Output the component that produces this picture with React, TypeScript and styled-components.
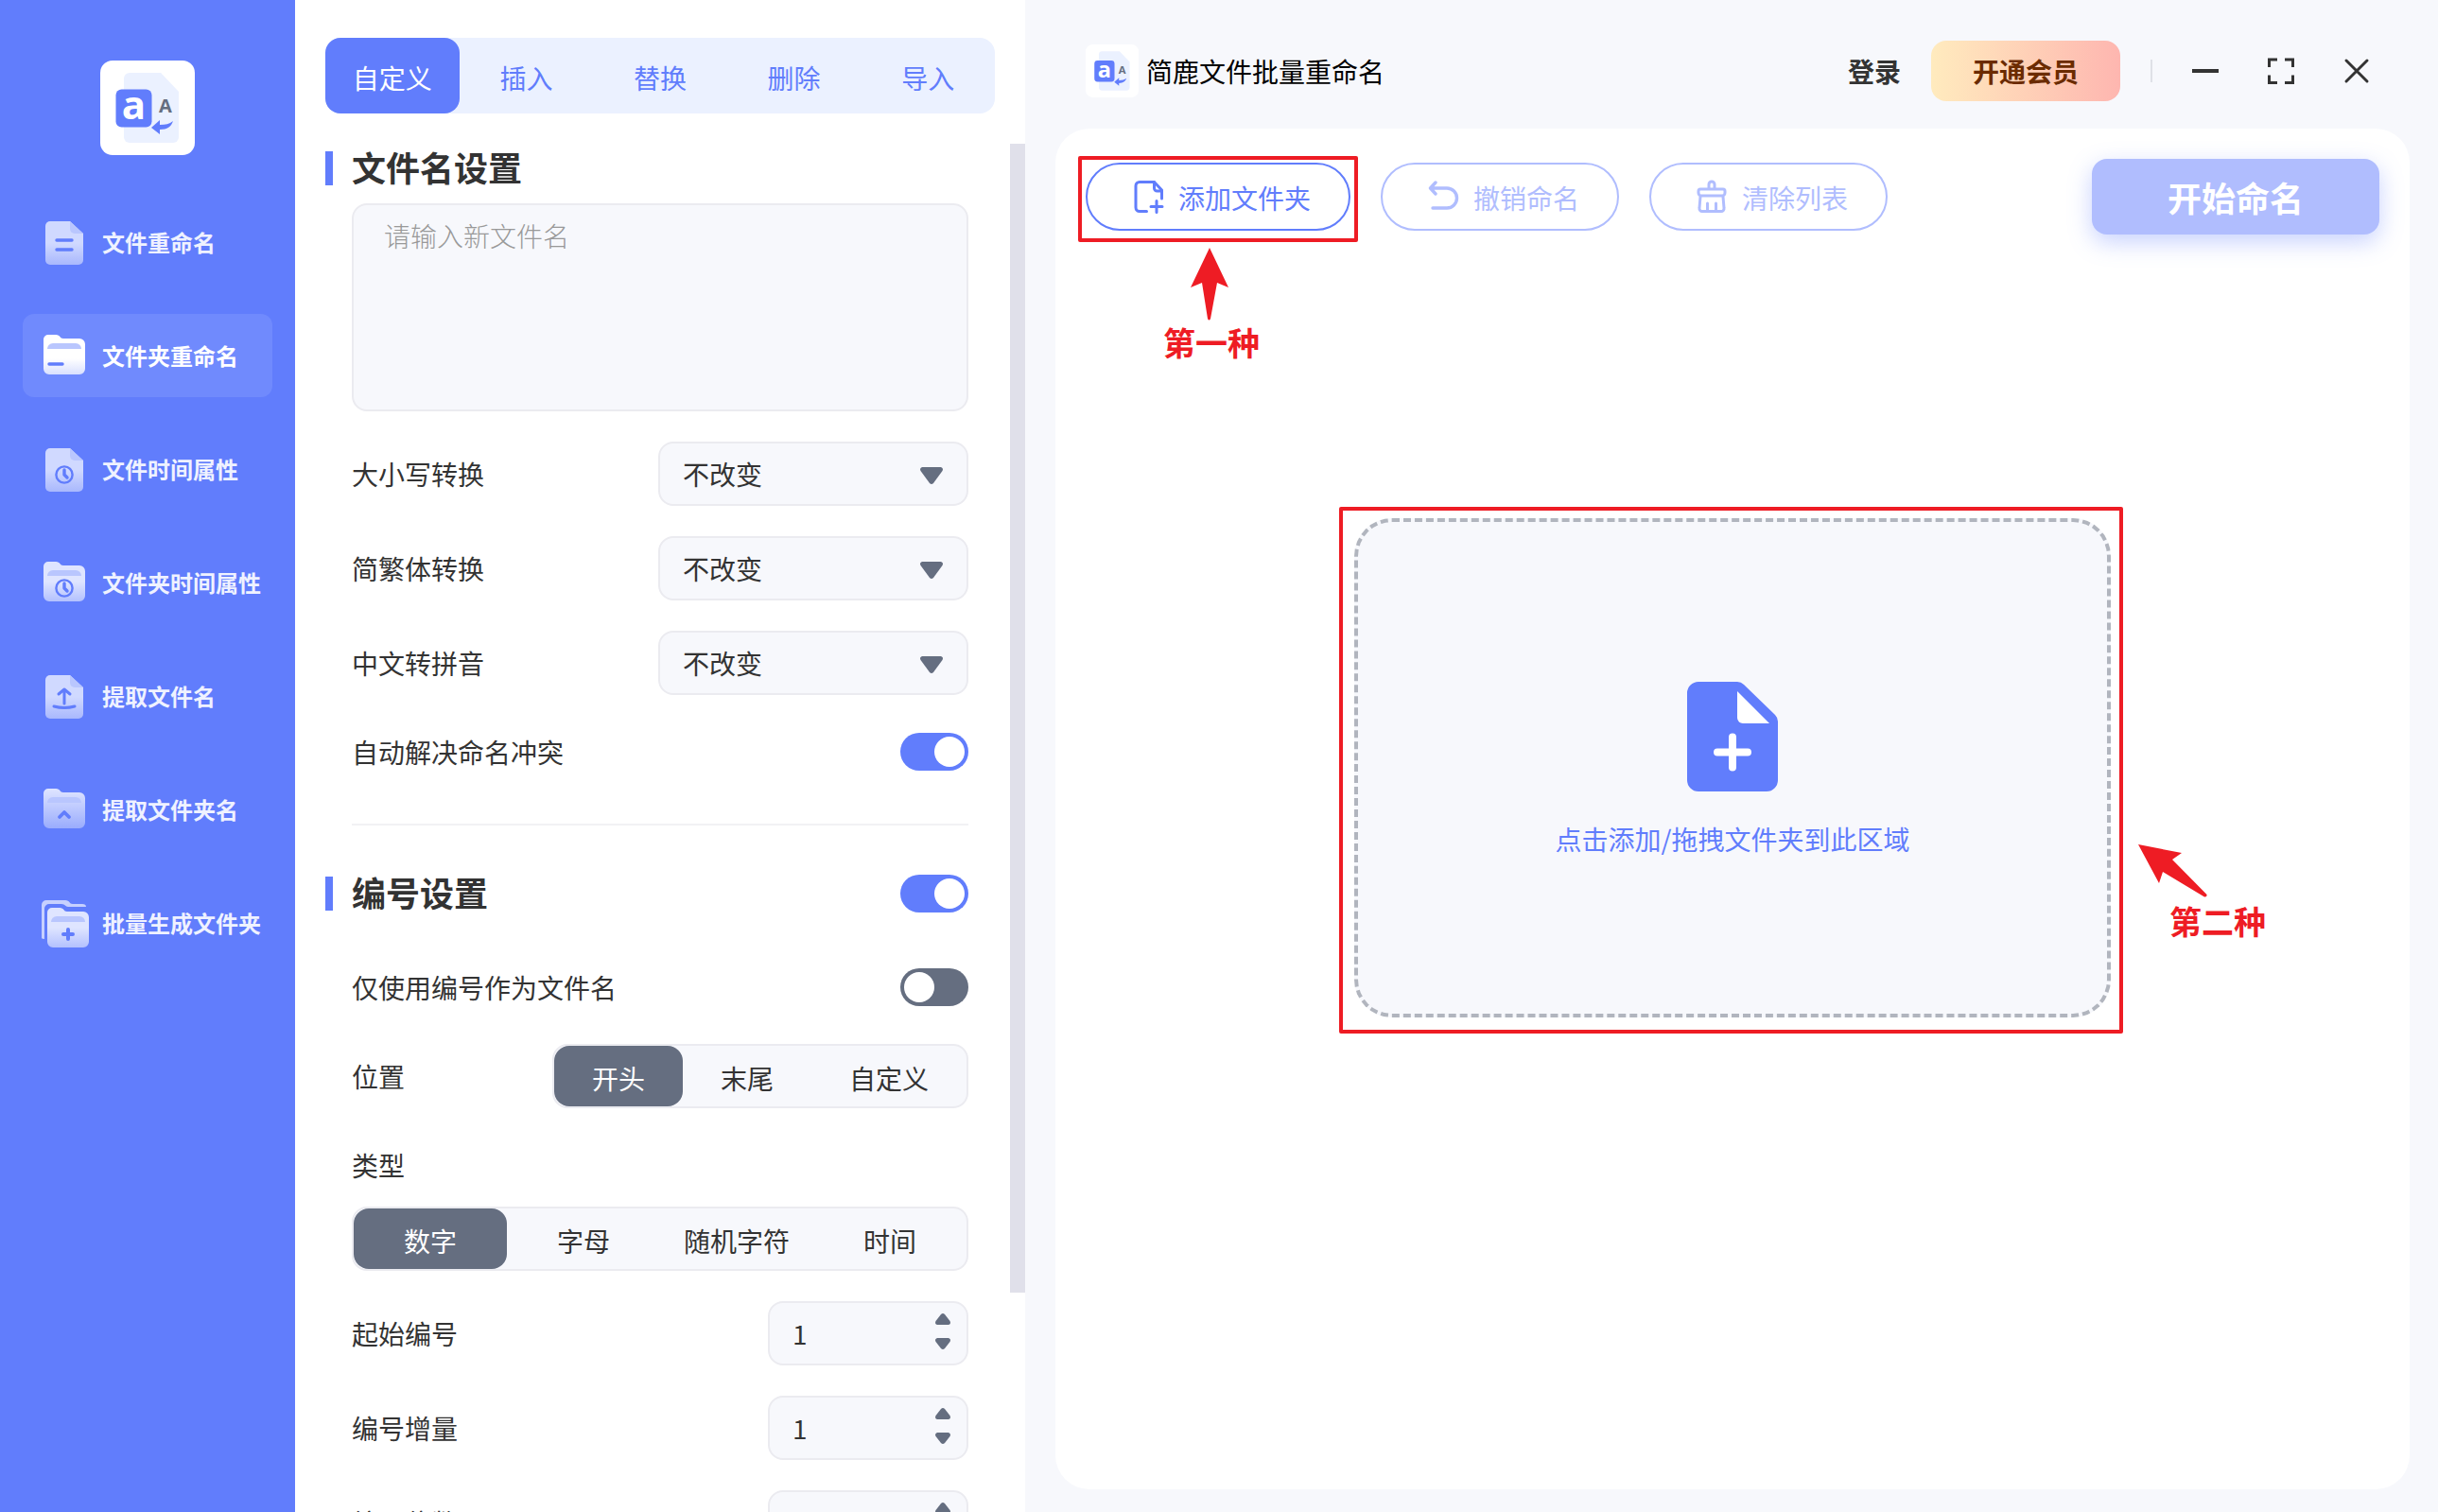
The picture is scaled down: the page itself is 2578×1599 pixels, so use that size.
import React, { useId, useState } from "react";
import styled, { createGlobalStyle, css } from "styled-components";

const c = {
  primary: "#617dfc",
  primarySoft: "#ebf1ff",
  primaryMuted: "#b0bdfe",
  slate: "#656e80",
  text: "#333333",
  surface: "#f7f8fc",
  line: "#ebebf0",
  mark: "#ee1c24",
};

const GlobalStyle = createGlobalStyle`
  *, *::before, *::after { box-sizing: border-box; }
  body { margin: 0; background: ${c.surface}; }
  body, button, input, select, textarea {
    font-family: "Noto Sans CJK SC", "Noto Sans", sans-serif;
    font-size: 28px;
    line-height: 40px;
    color: ${c.text};
  }
  button { border: 0; padding: 0; background: none; cursor: pointer; }
  button:disabled { cursor: default; }
  svg { display: block; flex: none; }
`;

/* ---------- frame ---------- */

const Shell = styled.div`
  display: grid;
  grid-template-columns: 312px 772px minmax(0, 1fr);
  height: 100vh;
  overflow: hidden;
`;

const Sidebar = styled.nav`
  display: flex;
  flex-direction: column;
  align-items: center;
  gap: 48px;
  padding: 64px 24px 0;
  background: ${c.primary};
`;

const NavList = styled.div`
  display: flex;
  flex-direction: column;
  align-self: stretch;
  gap: 32px;
`;

const NavButton = styled.button<{ $active: boolean }>`
  display: flex;
  align-items: center;
  gap: 12px;
  height: 88px;
  padding-left: 20px;
  border-radius: 12px;
  background: ${(p) => (p.$active ? "#708afd" : "transparent")};
  color: ${(p) => (p.$active ? "#ffffff" : "#eff2ff")};
  font-size: 24px;
  font-weight: 700;
  white-space: nowrap;
`;

/* ---------- settings panel ---------- */

const Panel = styled.section`
  display: flex;
  flex-direction: column;
  gap: 32px;
  min-height: 0;
  padding-top: 40px;
  background: #ffffff;
`;

const Tabs = styled.div`
  display: grid;
  grid-template-columns: repeat(5, 1fr);
  flex: none;
  height: 80px;
  margin: 0 32px;
  border-radius: 16px;
  background: ${c.primarySoft};
`;

const Tab = styled.button<{ $active: boolean }>`
  border-radius: 16px;
  padding-top: 4px;
  background: ${(p) => (p.$active ? c.primary : "transparent")};
  color: ${(p) => (p.$active ? "#ffffff" : c.primary)};
`;

const ScrollArea = styled.div`
  display: flex;
  flex: 1;
  min-height: 0;
`;

const ScrollBody = styled.div`
  flex: 1;
  min-width: 0;
  padding: 6px 44px 32px 32px;
  overflow: auto;
  scrollbar-width: none;
`;

const ScrollTrack = styled.div`
  flex: none;
  width: 16px;
`;

const ScrollThumb = styled.div`
  height: 84%;
  background: #e0e0ea;
`;

const SectionHead = styled.div`
  display: flex;
  align-items: center;
  gap: 20px;
  height: 40px;
`;

const SectionMark = styled.span`
  width: 8px;
  height: 36px;
  background: ${c.primary};
`;

const SectionTitle = styled.h2`
  flex: 1;
  margin: 0;
  padding-bottom: 4px;
  font-size: 36px;
  line-height: 40px;
  font-weight: 700;
`;

const SectionBody = styled.div<{ $top?: number }>`
  display: flex;
  flex-direction: column;
  padding: ${(p) => p.$top ?? 0}px 0 0 28px;
`;

const NameArea = styled.textarea`
  display: block;
  height: 220px;
  margin-bottom: 32px;
  padding: 12px 32px;
  border: 2px solid ${c.line};
  border-radius: 16px;
  background: ${c.surface};
  resize: none;
  outline: none;
  &::placeholder { color: #999999; font-weight: 300; opacity: 1; }
`;

const Row = styled.div<{ $h?: number; $gap?: number }>`
  display: flex;
  align-items: center;
  justify-content: space-between;
  height: ${(p) => p.$h ?? 68}px;
  margin-bottom: ${(p) => p.$gap ?? 32}px;
`;

const Divider = styled.hr`
  height: 2px;
  margin: 16px 0 52px;
  border: 0;
  background: #f2f2f4;
`;

const Field = styled.div<{ $w: number }>`
  display: grid;
  align-items: center;
  width: ${(p) => p.$w}px;
  height: 68px;
  border: 2px solid ${c.line};
  border-radius: 16px;
  background: ${c.surface};
  > * { grid-area: 1 / 1; }
`;

const SelectBox = styled.select`
  height: 64px;
  padding: 0 24px;
  border: 0;
  background: transparent;
  appearance: none;
  outline: none;
`;

const SelectArrow = styled.svg`
  justify-self: end;
  margin: 4px 24px 0 0;
  pointer-events: none;
`;

const NumberBox = styled.input`
  width: 100%;
  height: 64px;
  padding: 0 60px 0 24px;
  border: 0;
  background: transparent;
  appearance: textfield;
  outline: none;
  &::-webkit-inner-spin-button { appearance: none; }
`;

const Steppers = styled.div`
  display: grid;
  gap: 12px;
  justify-self: end;
  margin: 0 16px 4px 0;
`;

const Step = styled.button`
  display: block;
  line-height: 0;
`;

const Switch = styled.input`
  display: flex;
  flex: none;
  width: 72px;
  height: 40px;
  margin: 0;
  padding: 4px;
  border-radius: 20px;
  background: ${c.slate};
  appearance: none;
  cursor: pointer;
  &::before {
    content: "";
    width: 32px;
    height: 32px;
    border-radius: 50%;
    background: #ffffff;
  }
  &:checked { background: ${c.primary}; justify-content: flex-end; }
`;

const Segment = styled.label`
  display: flex;
  align-items: center;
  justify-content: center;
  padding: 4px 40px 0;
  border-radius: 16px;
  white-space: nowrap;
  cursor: pointer;
  &:has(input:checked) { background: ${c.slate}; color: #ffffff; }
  input { appearance: none; margin: 0; }
`;

const Segments = styled.div<{ $even?: boolean }>`
  display: flex;
  height: 68px;
  border: 2px solid ${c.line};
  border-radius: 16px;
  background: ${c.surface};
  ${(p) => p.$even && css`
    margin-bottom: 32px;
    ${Segment} { flex: 1; padding: 4px 0 0; }
  `}
`;

/* ---------- main area ---------- */

const Main = styled.main`
  display: flex;
  flex-direction: column;
  min-width: 0;
  padding: 0 30px 24px 32px;
`;

const TitleBar = styled.header`
  display: flex;
  align-items: center;
  height: 136px;
  padding: 14px 32px 0;
`;

const AppBadge = styled.span`
  margin-right: 8px;
`;

const AppName = styled.h1`
  flex: 1;
  margin: 0;
  font-size: 28px;
  font-weight: 400;
  color: #000000;
`;

const LoginButton = styled.button`
  margin-right: 32px;
  font-weight: 700;
`;

const VipButton = styled.button`
  width: 200px;
  height: 64px;
  border-radius: 16px;
  background: linear-gradient(90deg, #ffebbe, #feb6b0);
  color: #6b2b00;
  font-weight: 700;
`;

const BarSeparator = styled.span`
  width: 2px;
  height: 24px;
  margin: 0 32px;
  background: #dfe1e7;
`;

const WindowButtons = styled.div`
  display: flex;
  gap: 32px;
`;

const WindowButton = styled.button`
  width: 48px;
  height: 48px;
`;

const Card = styled.div`
  flex: 1;
  min-height: 0;
  padding: 32px;
  border-radius: 36px;
  background: #ffffff;
`;

const Toolbar = styled.div`
  display: flex;
  align-items: center;
  gap: 32px;
`;

const PillButton = styled.button`
  display: flex;
  align-items: center;
  gap: 8px;
  height: 72px;
  padding: 0 40px;
  border: 2px solid currentColor;
  border-radius: 36px;
  color: ${c.primary};
  white-space: nowrap;
  &:disabled { color: ${c.primaryMuted}; }
`;

const PillLabel = styled.span`
  padding-top: 2px;
`;

const StartButton = styled.button`
  width: 304px;
  height: 80px;
  margin-left: auto;
  border-radius: 16px;
  background: ${c.primaryMuted};
  box-shadow: 0 8px 24px rgba(97, 125, 252, 0.35);
  color: #ffffff;
  font-size: 36px;
  font-weight: 700;
`;

/* A control with a red frame drawn round it; $inset is the frame's reach outside the control. */
const Callout = styled.div<{ $inset: string }>`
  position: relative;
  &::after {
    content: "";
    position: absolute;
    inset: ${(p) => p.$inset};
    border: 4px solid ${c.mark};
    border-radius: 2px;
    pointer-events: none;
  }
`;

const Note = styled.div<{ $x: number; $y: number; $centered?: boolean }>`
  position: absolute;
  left: ${(p) => p.$x}px;
  top: ${(p) => p.$y}px;
  display: flex;
  flex-direction: column;
  align-items: ${(p) => (p.$centered ? "center" : "flex-start")};
  width: max-content;
  color: ${c.mark};
  font-size: 34px;
  font-weight: 700;
`;

const NoteIndent = styled.span`
  padding-left: 34px;
`;

const DropHolder = styled.div`
  display: flex;
  justify-content: center;
  margin-top: 300px;
`;

const DropZone = styled.button`
  display: flex;
  flex-direction: column;
  align-items: center;
  justify-content: center;
  gap: 30px;
  width: 800px;
  height: 528px;
  padding-top: 4px;
  border: 4px dashed #b1b5be;
  border-radius: 40px;
  background: ${c.surface};
  color: ${c.primary};
`;

/* ---------- drawings ---------- */

function Logo({ size }: { size: number }) {
  return (
    <svg width={size} height={size} viewBox="0 0 100 100" aria-hidden="true">
      <rect width="100" height="100" rx="13" fill="#fff" />
      <path d="M31 13h33l19 20v48a6 6 0 0 1-6 6H31a6 6 0 0 1-6-6V19a6 6 0 0 1 6-6z" fill="#ebf1ff" />
      <rect x="16.500" y="30.500" width="38" height="40" rx="6" fill={c.primary} />
      <text x="35.500" y="62" textAnchor="middle" fontFamily="Open Sans, Noto Sans, sans-serif" fontWeight="700" fontSize="42" fill="#fff">a</text>
      <text x="69" y="55" textAnchor="middle" fontFamily="Open Sans, Noto Sans, sans-serif" fontWeight="700" fontSize="20" fill={c.slate}>A</text>
      <path d="M54 71l9-8v5c6 0 10-1 14-4-2 6-6 9-14 9v5z" fill={c.primary} />
    </svg>
  );
}

type Glyph = "lines" | "dash" | "clock" | "upload" | "chevron" | "plus";
type Shape = "file" | "folder" | "stack";
type Tone = [string, string, number];

const ink = { fill: "none", stroke: c.primary, strokeWidth: 3.4, strokeLinecap: "round", strokeLinejoin: "round" } as const;

function GlyphMark({ kind }: { kind: Glyph }) {
  switch (kind) {
    case "lines":
      return <path d="M16 24h16M16 34h16" {...ink} />;
    case "dash":
      return <path d="M8 35h14" {...ink} />;
    case "clock":
      return (
        <>
          <circle cx="24" cy="32" r="8.600" {...ink} strokeWidth={2.4} />
          <path d="M24 27v5l3 3" {...ink} />
        </>
      );
    case "upload":
      return <path d="M24 34V19.500M18 24l6-5 6 5M13 37q11 3 22 0" {...ink} strokeWidth={3} />;
    case "chevron":
      return <path d="M19 34l5-5 5 5" {...ink} strokeWidth={3.8} />;
    case "plus":
      return <path d="M24 27v10M19 32h10" {...ink} strokeWidth={4} />;
  }
}

function FolderBody({ fill, glyph }: { fill: string; glyph: Glyph }) {
  return (
    <>
      <path d="M7 4h8c5 0 4 4 8 4h17a6 6 0 0 1 6 6v26a6 6 0 0 1-6 6H8a6 6 0 0 1-6-6V9a5 5 0 0 1 5-5z" fill={fill} />
      <path d="M6 19a6 6 0 0 1 6-6h24a6 6 0 0 1 6 6z" fill="#b9c6fe" />
      <GlyphMark kind={glyph} />
    </>
  );
}

function NavIcon({ shape, glyph, tone }: { shape: Shape; glyph: Glyph; tone: Tone }) {
  const id = useId();
  const fill = `url(#${id})`;
  return (
    <svg width="52" height="52" viewBox="0 0 52 52" aria-hidden="true">
      <defs>
        <linearGradient id={id} x1="0" y1="0" x2="0" y2="1">
          <stop offset={tone[2]} stopColor={tone[0]} />
          <stop offset="1" stopColor={tone[1]} />
        </linearGradient>
      </defs>
      {shape === "file" && (
        <>
          <path d="M9 4h21l14 13v28a5 5 0 0 1-5 5H9a5 5 0 0 1-5-5V9a5 5 0 0 1 5-5z" fill={fill} />
          <path d="M30 4l14 13h-9a5 5 0 0 1-5-5z" fill="#b9c6fe" />
          <GlyphMark kind={glyph} />
        </>
      )}
      {shape === "folder" && <FolderBody fill={fill} glyph={glyph} />}
      {shape === "stack" && (
        <>
          <path d="M0 42V7a5 5 0 0 1 5-5h20c5 0 4 4 8 4h10q4 0 4 3H28c-3 0-3-3-7-3H8a5 5 0 0 0-5 5v32q-3 0-3-1z" fill="#c6d0fe" />
          <g transform="translate(4 6)">
            <FolderBody fill={fill} glyph={glyph} />
          </g>
        </>
      )}
    </svg>
  );
}

const pen = { fill: "none", stroke: "currentColor", strokeWidth: 3, strokeLinecap: "round", strokeLinejoin: "round" } as const;

const AddFileIcon = () => (
  <svg width="48" height="48" viewBox="0 0 48 48" aria-hidden="true" {...pen}>
    <path d="M22.500 39.500H15a4 4 0 0 1-4-4v-23a4 4 0 0 1 4-4h15.500l8 8.500v9" />
    <path d="M30.500 8.500V15a3 3 0 0 0 3 3h5M33 28.500v12M27 34.500h12" />
  </svg>
);

const UndoIcon = () => (
  <svg width="48" height="48" viewBox="0 0 48 48" aria-hidden="true" {...pen} strokeWidth={3.4}>
    <path d="M16 9l-5.500 6 5.500 6M11 15h17a10.500 10.500 0 0 1 0 21H13" />
  </svg>
);

const BroomIcon = () => (
  <svg width="48" height="48" viewBox="0 0 48 48" aria-hidden="true" {...pen}>
    <path d="M21 16v-5a3 3 0 0 1 6 0v5M12 16h24a2 2 0 0 1 2 2v2a3 3 0 0 1-3 3H13a3 3 0 0 1-3-3v-2a2 2 0 0 1 2-2zM12 24l-1 12a3 3 0 0 0 3 3.500h20a3 3 0 0 0 3-3.500l-1-12M19.500 31v8M28.500 31v8" />
  </svg>
);

const DropIcon = () => (
  <svg width="96" height="116" viewBox="0 0 96 116" aria-hidden="true">
    <path d="M12 0h41q4 0 7 3l33 32q3 3 3 7v62a12 12 0 0 1-12 12H12a12 12 0 0 1-12-12V12A12 12 0 0 1 12 0z" fill={c.primary} />
    <path d="M53 10l34 34H59a6 6 0 0 1-6-6z" fill="#fff" />
    <path d="M48 58.500v32M32 74.500h32" stroke="#fff" strokeWidth="8" strokeLinecap="round" />
  </svg>
);

const Down = ({ w, h }: { w: number; h: number }) => (
  <path d={`M3 1h${w - 6}q3 1 1.500 4L${w / 2 + 2} ${h - 2}q-2 2-4 0L1.500 5Q0 2 3 1z`} fill={c.slate} />
);

/* ---------- composed controls ---------- */

function SelectRow({ label }: { label: string }) {
  const id = useId();
  return (
    <Row>
      <label htmlFor={id}>{label}</label>
      <Field $w={328}>
        <SelectBox id={id}>
          <option>不改变</option>
        </SelectBox>
        <SelectArrow width="26" height="20" viewBox="0 0 26 20" aria-hidden="true">
          <Down w={26} h={20} />
        </SelectArrow>
      </Field>
    </Row>
  );
}

function SwitchRow({ label, on }: { label: string; on?: boolean }) {
  const id = useId();
  return (
    <Row $h={56} $gap={32}>
      <label htmlFor={id}>{label}</label>
      <Switch id={id} type="checkbox" role="switch" defaultChecked={on} />
    </Row>
  );
}

function NumberRow({ label }: { label: string }) {
  const id = useId();
  const [value, setValue] = useState(1);
  return (
    <Row>
      <label htmlFor={id}>{label}</label>
      <Field $w={212}>
        <NumberBox id={id} type="number" value={value} onChange={(e) => setValue(Number(e.target.value))} />
        <Steppers>
          <Step type="button" aria-label="增加" onClick={() => setValue(value + 1)}>
            <svg width="18" height="14" viewBox="0 0 18 14"><g transform="rotate(180 9 7)"><Down w={18} h={14} /></g></svg>
          </Step>
          <Step type="button" aria-label="减少" onClick={() => setValue(value - 1)}>
            <svg width="18" height="14" viewBox="0 0 18 14"><Down w={18} h={14} /></svg>
          </Step>
        </Steppers>
      </Field>
    </Row>
  );
}

function SegmentGroup({ name, options, even, label }: { name: string; options: string[]; even?: boolean; label: string }) {
  return (
    <Segments role="radiogroup" aria-label={label} $even={even}>
      {options.map((o, i) => (
        <Segment key={o}>
          <input type="radio" name={name} defaultChecked={i === 0} />
          {o}
        </Segment>
      ))}
    </Segments>
  );
}

const navItems: { label: string; shape: Shape; glyph: Glyph; tone: Tone }[] = [
  { label: "文件重命名", shape: "file", glyph: "lines", tone: ["#d0d9ff", "#a9b8fd", 0.5] },
  { label: "文件夹重命名", shape: "folder", glyph: "dash", tone: ["#ffffff", "#d9e0fe", 0.6] },
  { label: "文件时间属性", shape: "file", glyph: "clock", tone: ["#d0d9ff", "#a9b8fd", 0.5] },
  { label: "文件夹时间属性", shape: "folder", glyph: "clock", tone: ["#dfe5ff", "#b3c1fe", 0.5] },
  { label: "提取文件名", shape: "file", glyph: "upload", tone: ["#d0d9ff", "#a9b8fd", 0.5] },
  { label: "提取文件夹名", shape: "folder", glyph: "chevron", tone: ["#dfe5ff", "#9aacfd", 0] },
  { label: "批量生成文件夹", shape: "stack", glyph: "plus", tone: ["#dfe5ff", "#b3c1fe", 0.5] },
];

export default function App() {
  const [nav, setNav] = useState(1);
  const [tab, setTab] = useState(0);
  return (
    <>
      <GlobalStyle />
      <Shell>
        <Sidebar>
          <Logo size={100} />
          <NavList>
            {navItems.map((n, i) => (
              <NavButton key={n.label} $active={i === nav} onClick={() => setNav(i)}>
                <NavIcon shape={n.shape} glyph={n.glyph} tone={n.tone} />
                {n.label}
              </NavButton>
            ))}
          </NavList>
        </Sidebar>

        <Panel>
          <Tabs role="tablist">
            {["自定义", "插入", "替换", "删除", "导入"].map((t, i) => (
              <Tab key={t} role="tab" aria-selected={i === tab} $active={i === tab} onClick={() => setTab(i)}>
                {t}
              </Tab>
            ))}
          </Tabs>
          <ScrollArea>
            <ScrollBody>
              <SectionHead>
                <SectionMark />
                <SectionTitle>文件名设置</SectionTitle>
              </SectionHead>
              <SectionBody $top={17}>
                <NameArea aria-label="新文件名" placeholder="请输入新文件名" />
                <SelectRow label="大小写转换" />
                <SelectRow label="简繁体转换" />
                <SelectRow label="中文转拼音" />
                <SwitchRow label="自动解决命名冲突" on />
                <Divider />
              </SectionBody>
              <SectionHead>
                <SectionMark />
                <SectionTitle id="numbering">编号设置</SectionTitle>
                <Switch type="checkbox" role="switch" aria-labelledby="numbering" defaultChecked />
              </SectionHead>
              <SectionBody $top={51}>
                <SwitchRow label="仅使用编号作为文件名" />
                <Row>
                  <span>位置</span>
                  <SegmentGroup name="position" label="位置" options={["开头", "末尾", "自定义"]} />
                </Row>
                <Row $h={56} $gap={16}>类型</Row>
                <SegmentGroup even name="kind" label="类型" options={["数字", "字母", "随机字符", "时间"]} />
                <NumberRow label="起始编号" />
                <NumberRow label="编号增量" />
                <NumberRow label="编号位数" />
              </SectionBody>
            </ScrollBody>
            <ScrollTrack>
              <ScrollThumb />
            </ScrollTrack>
          </ScrollArea>
        </Panel>

        <Main>
          <TitleBar>
            <AppBadge><Logo size={56} /></AppBadge>
            <AppName>简鹿文件批量重命名</AppName>
            <LoginButton>登录</LoginButton>
            <VipButton>开通会员</VipButton>
            <BarSeparator />
            <WindowButtons>
              <WindowButton aria-label="最小化">
                <svg width="48" height="48" viewBox="0 0 48 48"><path d="M10 24h28" stroke={c.text} strokeWidth="4" /></svg>
              </WindowButton>
              <WindowButton aria-label="最大化">
                <svg width="48" height="48" viewBox="0 0 48 48" fill="none" stroke={c.text} strokeWidth="3">
                  <path d="M20 12h-8.500v8M28 12h8.500v8M20 36.500h-8.500v-8M28 36.500h8.500v-8" />
                </svg>
              </WindowButton>
              <WindowButton aria-label="关闭">
                <svg width="48" height="48" viewBox="0 0 48 48"><path d="M13 13l22 22M35 13L13 35" stroke={c.text} strokeWidth="3" strokeLinecap="round" /></svg>
              </WindowButton>
            </WindowButtons>
          </TitleBar>

          <Card>
            <Toolbar>
              <Callout $inset="-7px -8px -12px">
                <PillButton><AddFileIcon /><PillLabel>添加文件夹</PillLabel></PillButton>
                <Note $centered $x={82} $y={90}>
                  <svg width="48" height="80" viewBox="0 0 48 80" aria-hidden="true">
                    <path d="M22 0l20 42-12-5-7 38q-1.500 3-3 0l-6-38-12 5z" fill={c.mark} />
                  </svg>
                  第一种
                </Note>
              </Callout>
              <PillButton disabled><UndoIcon /><PillLabel>撤销命名</PillLabel></PillButton>
              <PillButton disabled><BroomIcon /><PillLabel>清除列表</PillLabel></PillButton>
              <StartButton>开始命名</StartButton>
            </Toolbar>
            <DropHolder>
              <Callout $inset="-12px -13px -17px -16px">
                <DropZone>
                  <DropIcon />
                  点击添加/拖拽文件夹到此区域
                </DropZone>
                <Note $x={828} $y={344}>
                  <svg width="80" height="62" viewBox="0 0 80 62" aria-hidden="true">
                    <path d="M1 1l46 9-10 7 36.500 37q.5 3-2.500 2.500L27 30l-4 12z" fill={c.mark} />
                  </svg>
                  <NoteIndent>第二种</NoteIndent>
                </Note>
              </Callout>
            </DropHolder>
          </Card>
        </Main>
      </Shell>
    </>
  );
}
